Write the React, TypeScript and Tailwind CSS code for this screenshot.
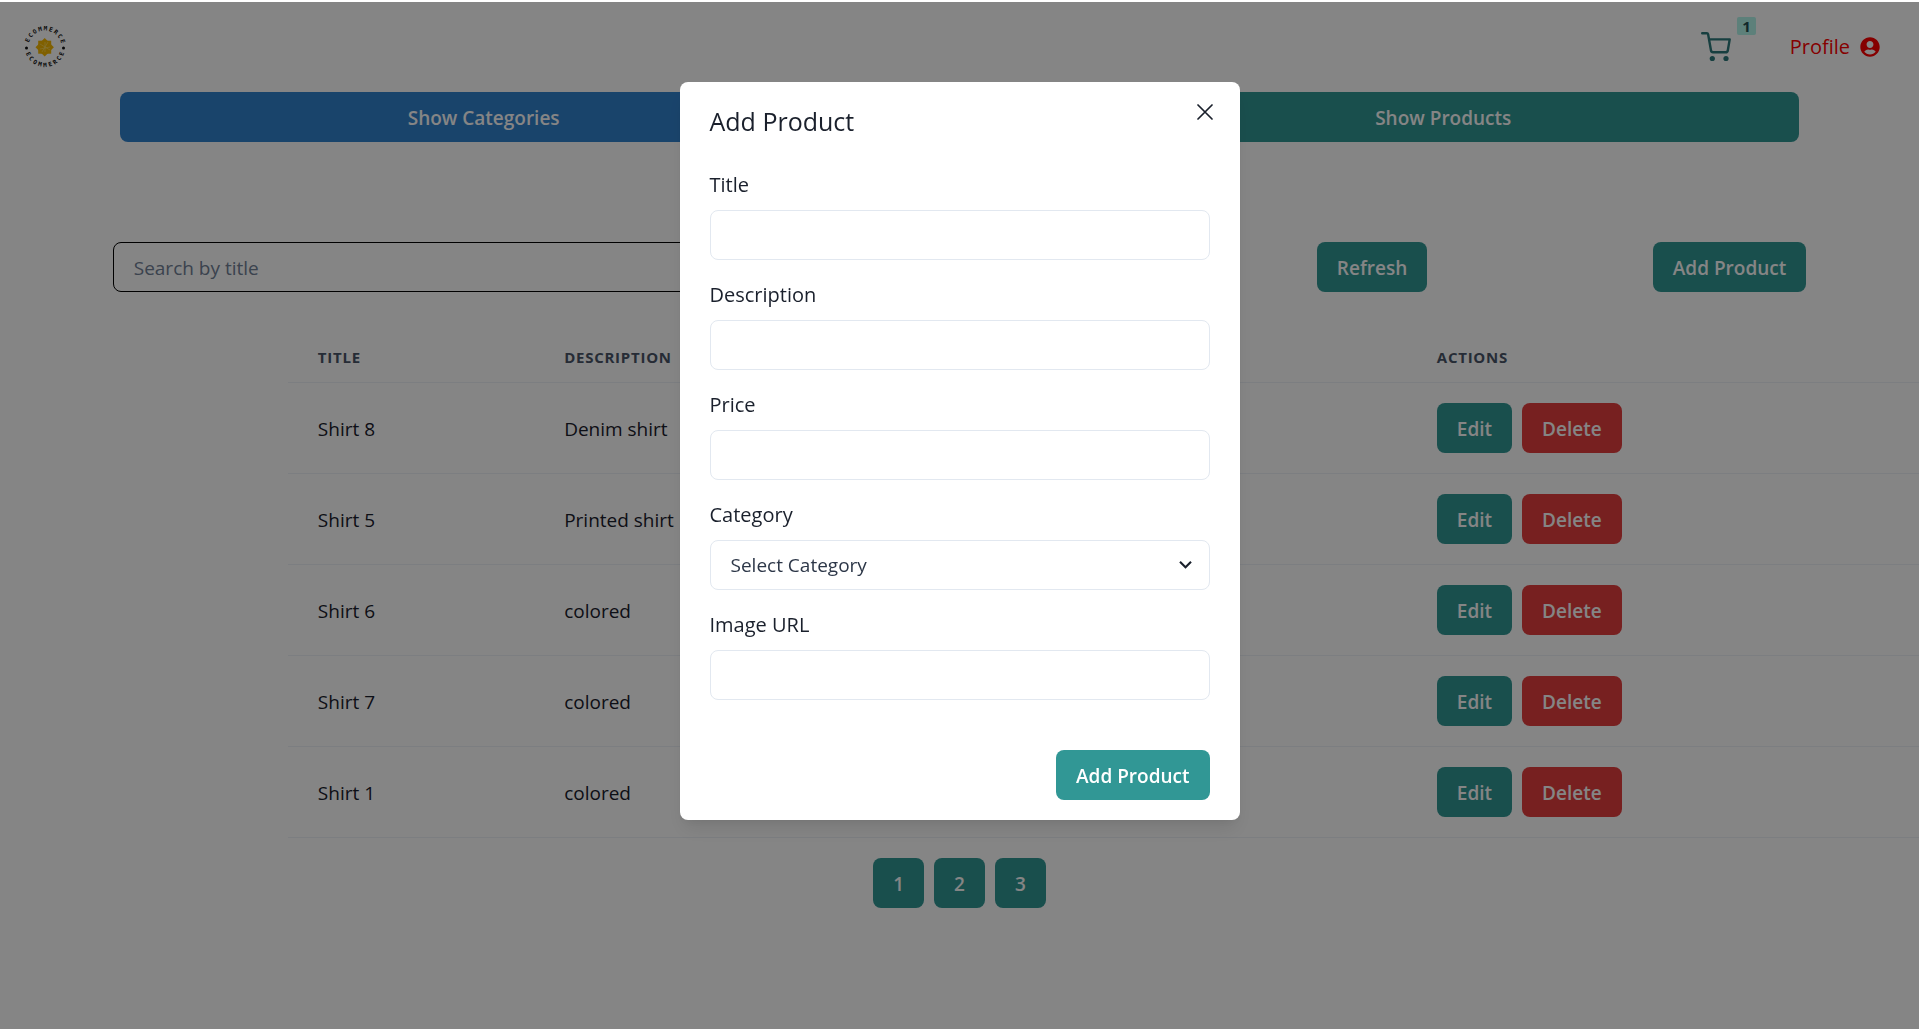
import React from "react";
import { FaUserCircle } from "react-icons/fa";

const base =
  "h-[50px] rounded-lg px-5 pt-0.5 text-[19px] leading-6 font-semibold text-white";

const labelStyle = "mb-2.5 block text-[20px] leading-[30px] font-medium";

const products = [
  { title: "Shirt 8", description: "Denim shirt" },
  { title: "Shirt 5", description: "Printed shirt" },
  { title: "Shirt 6", description: "colored" },
  { title: "Shirt 7", description: "colored" },
  { title: "Shirt 1", description: "colored" },
];

type ButtonProps = React.ButtonHTMLAttributes<HTMLButtonElement>;

function TealButton({ className = "", ...props }: ButtonProps) {
  return <button type="button" className={`${base} bg-[#319795] ${className}`} {...props} />;
}

function Logo() {
  return (
    <svg viewBox="0 0 60 60" className="size-[60px]" role="img" aria-label="Ecommerce">
      <defs>
        <path id="logo-top" d="M 13.500 30 A 16.500 16.500 0 0 1 46.500 30" />
        <path id="logo-bottom" d="M 10 30 A 20 20 0 0 0 50 30" />
      </defs>
      <g fill="#111" fontFamily="DejaVu Sans Mono" fontWeight="700" textAnchor="middle">
        <text fontSize="6" letterSpacing="1.400"><textPath href="#logo-top" startOffset="52%">ECOMMERCE</textPath></text>
        <text fontSize="6" letterSpacing="2.200"><textPath href="#logo-bottom" startOffset="52%">ECOMMERCE</textPath></text>
      </g>
      <circle cx="11.5" cy="31" r="1.500" fill="#111" />
      <circle cx="48.500" cy="31" r="1.500" fill="#111" />
      <g fill="#f5b800">
        <rect x="23.200" y="23.700" width="13" height="13" />
        <rect x="23.200" y="23.700" width="13" height="13" transform="rotate(45 29.700 30.200)" />
      </g>
      <path d="M25 27l10 6M27 35l6-10M25 32l10-2M30 25v10" stroke="#ffe070" strokeWidth=".6" />
    </svg>
  );
}

function CartIcon() {
  return (
    <svg viewBox="0 0 30 30" className="h-[30px] w-[30px]" fill="none" stroke="#2c7a7b" strokeWidth="2.400" strokeLinecap="round" strokeLinejoin="round" aria-hidden="true">
      <path d="M1.200 1.300h4.700q1 0 1.200 1L10 18.500q.3 1.800 2 1.800h12.800q1.700 0 2-1.800L28.700 7.400H8" />
      <g fill="#2c7a7b" stroke="none">
        <circle cx="11.300" cy="26.500" r="2.600" />
        <circle cx="25" cy="26.500" r="2.600" />
      </g>
    </svg>
  );
}

function Field({ id, label }: { id: string; label: string }) {
  return (
    <div className="mb-5">
      <label htmlFor={id} className={labelStyle}>{label}</label>
      <input id={id} type="text" className="block h-[50px] w-full rounded-lg border border-[#e2e8f0] px-5 text-[19px] outline-none" />
    </div>
  );
}

function AddProductDialog() {
  return (
    <div className="fixed inset-x-0 top-0.5 bottom-0 flex items-start justify-center bg-black/48">
      <section role="dialog" aria-modal="true" aria-labelledby="dialog-title" className="relative mt-20 w-full max-w-[560px] rounded-lg bg-white shadow-[0_12px_19px_-4px_rgba(0,0,0,0.1),0_5px_8px_-3px_rgba(0,0,0,0.05)]">
        <h2 id="dialog-title" className="px-[30px] py-5 text-[25px] leading-[38px] font-medium">Add Product</h2>
        <button type="button" aria-label="Close" className="absolute top-2.5 right-[15px] grid size-10 place-items-center">
          <svg viewBox="0 0 16 16" className="size-4" stroke="currentColor" strokeWidth="1.700" strokeLinecap="round" aria-hidden="true">
            <path d="M1 1l14 14M15 1L1 15" />
          </svg>
        </button>
        <form>
          <div className="px-[30px] py-2.5">
            <Field id="title" label="Title" />
            <Field id="description" label="Description" />
            <Field id="price" label="Price" />
            <div className="mb-5">
              <label htmlFor="category" className={labelStyle}>Category</label>
              <div className="relative">
                <select id="category" className="block h-[50px] w-full appearance-none rounded-lg border border-[#e2e8f0] bg-white px-5 text-[19px] text-[#2d3748] outline-none">
                  <option>Select Category</option>
                </select>
                <svg viewBox="0 0 24 24" className="pointer-events-none absolute top-3 right-3 size-[25px]" fill="currentColor" aria-hidden="true">
                  <path d="M16.590 8.590L12 13.170 7.410 8.590 6 10l6 6 6-6z" />
                </svg>
              </div>
            </div>
            <Field id="image" label="Image URL" />
          </div>
          <div className="flex justify-end px-[30px] py-5">
            <TealButton>Add Product</TealButton>
          </div>
        </form>
      </section>
    </div>
  );
}

export default function App() {
  return (
    <div className="min-h-screen overflow-x-hidden bg-white pt-0.5 font-['Open_Sans',sans-serif] text-[#1a202c]">
      <header className="flex h-[90px] items-center justify-between pr-[39px] pl-[15px]">
        <a href="#home"><Logo /></a>
        <div className="flex items-center">
          <a href="#cart" aria-label="Cart, 1 item" className="flex h-[60px] items-start">
            <span className="mt-[15px]"><CartIcon /></span>
            <span className="ml-1.5 rounded-xs bg-[#b2f5ea] px-[5px] text-[15px] leading-[18px] font-bold text-[#234e52]">1</span>
          </a>
          <a href="#profile" className="ml-[34px] flex items-center gap-2.5 text-[20px] text-[#ff0000]">
            Profile <FaUserCircle className="size-5" />
          </a>
        </div>
      </header>

      <nav className="mx-auto flex w-7/8 gap-60">
        <button type="button" className={`${base} flex-auto bg-[#3182ce]`}>Show Categories</button>
        <TealButton className="flex-auto">Show Products</TealButton>
      </nav>

      <main>
        <div className="mt-[100px] flex justify-around">
          <input type="search" aria-label="Search by title" placeholder="Search by title" className="h-[50px] w-[51%] rounded-lg border border-black px-5 pt-0.5 text-[19px] outline-none placeholder:text-[#718096]" />
          <TealButton>Refresh</TealButton>
          <TealButton>Add Product</TealButton>
        </div>

        <table className="mt-10 ml-[15%] w-[85%] table-fixed border-collapse">
          <thead>
            <tr className="h-[50px] border-b border-[#edf2f7] text-left text-[15px] tracking-wider text-[#4a5568] uppercase">
              <th scope="col" className="w-[15.1%] px-[30px]">Title</th>
              <th scope="col" className="w-[53.5%] px-[30px]">Description</th>
              <th scope="col" className="px-[30px]">Actions</th>
            </tr>
          </thead>
          <tbody>
            {products.map((p) => (
              <tr key={p.title} className="h-[91px] border-b border-[#edf2f7] text-[19px]">
                <td className="px-[30px] pt-1">{p.title}</td>
                <td className="px-[30px] pt-1">{p.description}</td>
                <td className="px-[30px]">
                  <div className="flex gap-2.5">
                    <TealButton>Edit</TealButton>
                    <button type="button" className={`${base} bg-[#e53e3e]`}>Delete</button>
                  </div>
                </td>
              </tr>
            ))}
          </tbody>
        </table>

        <div className="mt-5 flex justify-center gap-2.5">
          <TealButton>1</TealButton>
          <TealButton>2</TealButton>
          <TealButton>3</TealButton>
        </div>
      </main>

      <AddProductDialog />
    </div>
  );
}
